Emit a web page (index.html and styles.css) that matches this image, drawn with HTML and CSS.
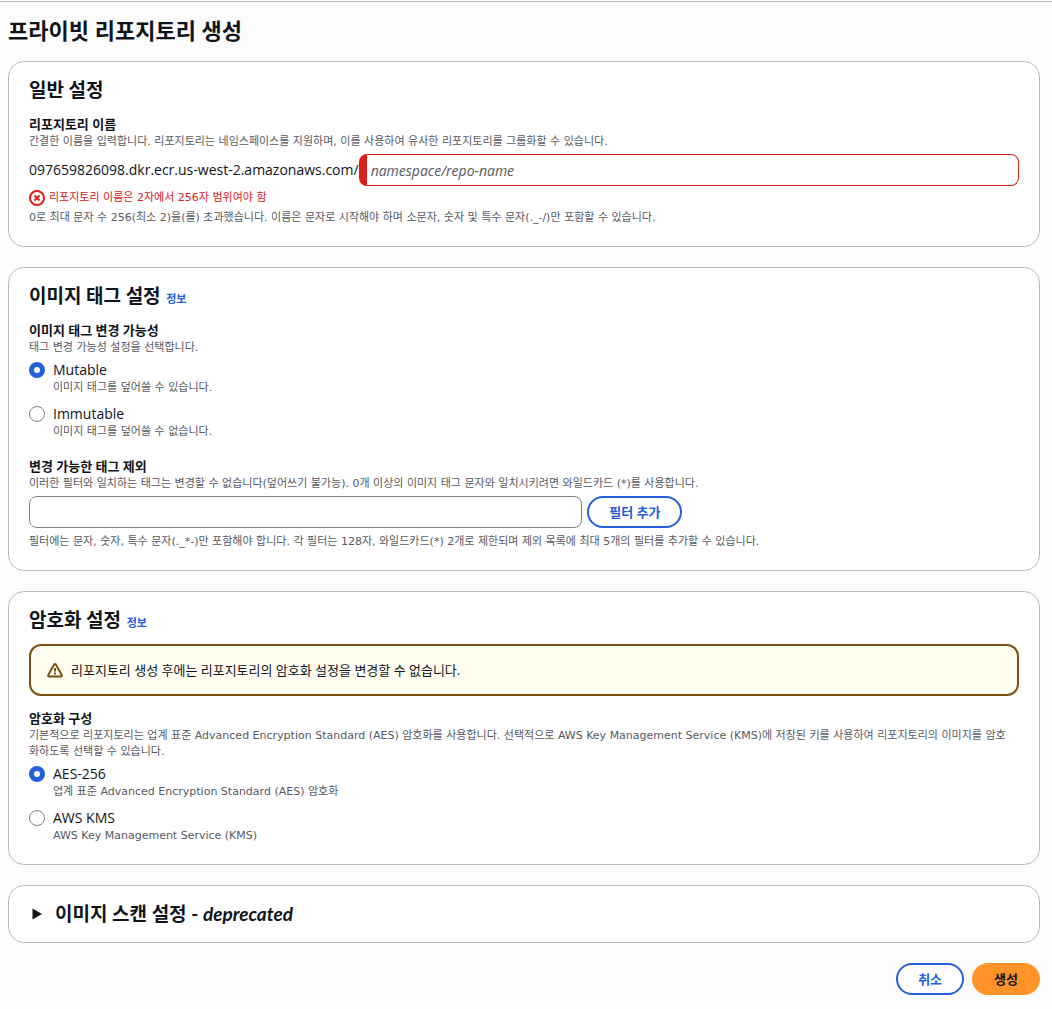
FILE: index.html
```html
<!DOCTYPE html>
<html lang="ko">
<head>
<meta charset="utf-8">
<meta name="viewport" content="width=device-width, initial-scale=1">
<title>프라이빗 리포지토리 생성</title>
<link rel="stylesheet" href="styles.css">
</head>
<body>
<main class="page">
  <h1 class="page-title">프라이빗 리포지토리 생성</h1>
  <form class="form">
    <section class="card">
      <h2 class="card-title">일반 설정</h2>
      <div class="field">
        <label class="label" for="repo-name">리포지토리 이름</label>
        <p class="hint">간결한 이름을 입력합니다. 리포지토리는 네임스페이스를 지원하며, 이를 사용하여 유사한 리포지토리를 그룹화할 수 있습니다.</p>
        <div class="name-row">
          <span class="prefix">097659826098.dkr.ecr.us-west-2.amazonaws.com/</span>
          <input class="input input-invalid" id="repo-name" type="text" placeholder="namespace/repo-name" aria-invalid="true" aria-describedby="repo-error">
        </div>
        <p class="error" id="repo-error">
          <svg class="icon" viewBox="0 0 16 16" aria-hidden="true"><circle cx="8" cy="8" r="7"/><path d="M10.500 5.500l-5 5M5.500 5.500l5 5"/></svg>
          <span>리포지토리 이름은 2자에서 256자 범위여야 함</span>
        </p>
        <p class="hint constraint">0로 최대 문자 수 256(최소 2)을(를) 초과했습니다. 이름은 문자로 시작해야 하며 소문자, 숫자 및 특수 문자(._-/)만 포함할 수 있습니다.</p>
      </div>
    </section>

    <section class="card">
      <h2 class="card-title">이미지 태그 설정 <a class="info" href="#">정보</a></h2>
      <fieldset class="field">
        <legend class="label">이미지 태그 변경 가능성</legend>
        <p class="hint">태그 변경 가능성 설정을 선택합니다.</p>
        <div class="options">
          <div class="option">
            <input class="radio" type="radio" name="mutability" id="mutable" checked>
            <label class="option-label" for="mutable">Mutable</label>
            <p class="hint">이미지 태그를 덮어쓸 수 있습니다.</p>
          </div>
          <div class="option">
            <input class="radio" type="radio" name="mutability" id="immutable">
            <label class="option-label" for="immutable">Immutable</label>
            <p class="hint">이미지 태그를 덮어쓸 수 없습니다.</p>
          </div>
        </div>
      </fieldset>
      <div class="field field-next">
        <label class="label" for="tag-filter">변경 가능한 태그 제외</label>
        <p class="hint">이러한 필터와 일치하는 태그는 변경할 수 없습니다(덮어쓰기 불가능). 0개 이상의 이미지 태그 문자와 일치시키려면 와일드카드 (*)를 사용합니다.</p>
        <div class="filter-row">
          <input class="input" id="tag-filter" type="text">
          <button class="button" type="button">필터 추가</button>
        </div>
        <p class="hint filter-note">필터에는 문자, 숫자, 특수 문자(._*-)만 포함해야 합니다. 각 필터는 128자, 와일드카드(*) 2개로 제한되며 제외 목록에 최대 5개의 필터를 추가할 수 있습니다.</p>
      </div>
    </section>

    <section class="card">
      <h2 class="card-title">암호화 설정 <a class="info" href="#">정보</a></h2>
      <div class="alert" role="note">
        <svg class="icon" viewBox="0 0 16 16" aria-hidden="true"><path d="M7.100 2.500a1 1 0 0 1 1.800 0l5.900 10.600a1 1 0 0 1-.9 1.400H2.100a1 1 0 0 1-.9-1.400z"/><path d="M8 6v3.500M8 10.500v2"/></svg>
        <span>리포지토리 생성 후에는 리포지토리의 암호화 설정을 변경할 수 없습니다.</span>
      </div>
      <fieldset class="field">
        <legend class="label">암호화 구성</legend>
        <p class="hint">기본적으로 리포지토리는 업계 표준 Advanced Encryption Standard (AES) 암호화를 사용합니다. 선택적으로 AWS Key Management Service (KMS)에 저장된 키를 사용하여 리포지토리의 이미지를 암호화하도록 선택할 수 있습니다.</p>
        <div class="options">
          <div class="option">
            <input class="radio" type="radio" name="encryption" id="aes" checked>
            <label class="option-label" for="aes">AES-256</label>
            <p class="hint">업계 표준 Advanced Encryption Standard (AES) 암호화</p>
          </div>
          <div class="option">
            <input class="radio" type="radio" name="encryption" id="kms">
            <label class="option-label" for="kms">AWS KMS</label>
            <p class="hint">AWS Key Management Service (KMS)</p>
          </div>
        </div>
      </fieldset>
    </section>

    <details class="card card-collapsed">
      <summary class="summary">
        <svg class="icon caret" viewBox="0 0 16 16" aria-hidden="true"><path d="M3.500 2.500l9.500 5.500-9.500 5.500z"/></svg>
        <h2 class="card-title">이미지 스캔 설정 - <em>deprecated</em></h2>
      </summary>
    </details>

    <div class="actions">
      <button class="button" type="button">취소</button>
      <button class="button button-primary" type="submit">생성</button>
    </div>
  </form>
</main>
</body>
</html>
```

FILE: styles.css
```css
:root {
  --text: #0f141a;
  --muted: #565962;
  --blue: #2460dc;
  --red: #d9201a;
  --amber: #7a4f10;
}

* { box-sizing: border-box; }

body {
  margin: 0;
  background: #fcfcfd;
  color: var(--text);
  font: 14px/20px "Open Sans", "Noto Sans CJK KR", sans-serif;
}

h1, h2, p { margin: 0; }

.page {
  margin-top: 1px;
  border-top: 1px solid #b9bac2;
  padding: 14px 12px 14px 8px;
}

.page-title {
  margin-bottom: 17px;
  font-size: 22px;
  line-height: 28px;
  font-weight: 700;
}

.form {
  display: flex;
  flex-direction: column;
  gap: 20px;
}

.card {
  padding: 16px 20px 20px;
  border: 1px solid #b9bac2;
  border-radius: 16px;
  background: #fff;
}

.card-title {
  font-family: Lato, "Noto Sans CJK KR", sans-serif;
  font-size: 19px;
  line-height: 24px;
  font-weight: 700;
}

.card-collapsed { padding: 16px 20px; }

.info {
  margin-left: 1px;
  color: var(--blue);
  font-size: 11px;
  line-height: 16px;
  text-decoration: none;
}

.field {
  min-width: 0;
  margin: 12px 0 0;
  padding: 0;
  border: 0;
}

.field-next { margin-top: 16px; }

.label {
  display: block;
  padding: 0;
  font-size: 13px;
  line-height: 20px;
  font-weight: 700;
}

.hint,
.error {
  padding-right: 8px;
  color: var(--muted);
  font-family: "DejaVu Sans", "Noto Sans CJK KR", sans-serif;
  font-size: 11px;
  line-height: 16px;
}

.name-row,
.filter-row {
  display: flex;
  align-items: center;
  gap: 5px;
  margin-top: 4px;
}

.name-row { gap: 0; }
.filter-row { width: 66%; }

.prefix { white-space: nowrap; }

.input {
  flex: 1;
  min-width: 0;
  height: 32px;
  padding: 4px 12px;
  border: 1px solid #7f828c;
  border-radius: 8px;
  background: #fff;
  color: var(--text);
  font: inherit;
}

.input::placeholder {
  color: var(--muted);
  font-style: italic;
  opacity: 1;
}

.input-invalid {
  padding-left: 4px;
  border-color: var(--red);
  border-left-width: 8px;
}

.icon {
  flex: none;
  width: 16px;
  height: 16px;
  fill: none;
  stroke: currentColor;
  stroke-width: 2;
}

.error {
  display: flex;
  gap: 4px;
  margin-top: 4px;
  color: var(--red);
}

.constraint { margin-top: 4px; }
.filter-note { margin-top: 6px; }

.options {
  display: grid;
  gap: 8px;
  margin-top: 4px;
}

.option {
  display: grid;
  grid-template-columns: 16px 1fr;
  column-gap: 8px;
  align-items: center;
}

.option .hint { grid-column: 2; }

.radio {
  appearance: none;
  width: 16px;
  height: 16px;
  margin: 0;
  border: 1px solid #7f828c;
  border-radius: 50%;
  background: #fff;
}

.radio:checked { border: 5px solid var(--blue); }

.button {
  height: 32px;
  padding: 0 20px;
  border: 2px solid var(--blue);
  border-radius: 16px;
  background: #fff;
  color: var(--blue);
  font: 700 13px/20px "Open Sans", "Noto Sans CJK KR", sans-serif;
  white-space: nowrap;
}

.button-primary {
  border-color: #ff9328;
  background: #ff9328;
  color: var(--text);
}

.alert {
  display: flex;
  align-items: center;
  gap: 8px;
  margin-top: 12px;
  padding: 14px 16px;
  border: 2px solid var(--amber);
  border-radius: 12px;
  background: #fffef0;
  font-size: 13px;
}

.alert .icon { color: var(--amber); }

.summary {
  display: flex;
  align-items: center;
  gap: 10px;
  list-style: none;
}

.summary::-webkit-details-marker { display: none; }

.caret {
  fill: currentColor;
  stroke: none;
}

.actions {
  display: flex;
  justify-content: flex-end;
  gap: 8px;
}
```
